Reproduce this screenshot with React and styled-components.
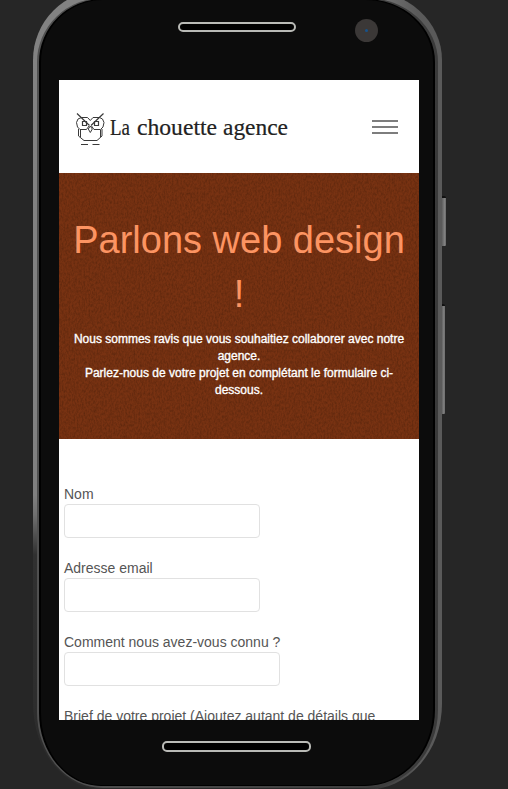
import React from "react";
import styled, { createGlobalStyle } from "styled-components";

const GlobalStyle = createGlobalStyle`
  * { box-sizing: border-box; }
  body { margin: 0; background: #262626; font-family: "Liberation Sans", Arial, sans-serif; }
`;

const Stage = styled.div`
  position: relative;
  width: 508px;
  height: 789px;
  overflow: hidden;
  background: #262626;
  display: flow-root;
`;

const SideButton = styled.div`
  position: absolute;
  left: 441px;
  top: ${(p) => p.$top}px;
  width: ${(p) => p.$width}px;
  height: ${(p) => p.$height}px;
  background: linear-gradient(90deg, #525252, #808080 70%, #6a6a6a);
  border-top: 2px solid #111;
  border-radius: 0 2px 1px 0;
`;

const Shell = styled.div`
  position: relative;
  width: 409px;
  height: 800px;
  margin: -10px 0 0 33px;
  padding: 8px 4px 2px 4px;
  border-radius: 70px 78px 76px 70px / 70px 70px 86px 86px;
  background: linear-gradient(90deg, transparent 80%, #5a5a5a 94%),
    linear-gradient(180deg, #828282 0, #808080 505px, #707070 525px, #303030 565px, #2b2b2b 100%);
`;

const Rim = styled.div`
  height: 100%;
  padding: 1px 3px 2px 2px;
  border-radius: 66px 72px 72px 66px / 64px 64px 78px 76px;
  background: linear-gradient(90deg, #505050, #444 60%, #3a3a3a);
`;

const Face = styled.div`
  height: 100%;
  display: flex;
  flex-direction: column;
  align-items: center;
  padding-left: 4px;
  border: 1px solid #000;
  border-left-width: 2px;
  border-right-width: 2px;
  border-radius: 64px 70px 70px 62px / 63px 63px 76px 73px;
  background: #0c0c0c;
`;

const TopBezel = styled.div`
  width: 360px;
  height: 80px;
  flex: none;
  display: flex;
  align-items: flex-start;
  padding: 22px 0 0 119px;
`;

const Speaker = styled.div`
  width: ${(p) => p.$width}px;
  height: ${(p) => p.$height}px;
  border: 2px solid #b9bab6;
  border-radius: 5px;
  background: #000;
`;

const Camera = styled.div`
  display: flex;
  align-items: center;
  justify-content: center;
  width: 23px;
  height: 23px;
  margin: -3px 0 0 59px;
  border-radius: 50%;
  background: #3b3837;

  &::after {
    content: "";
    width: 3px;
    height: 3px;
    border-radius: 50%;
    background: #17528a;
  }
`;

const Screen = styled.main`
  width: 360px;
  height: 640px;
  flex: none;
  overflow: hidden;
  background: #fff;
`;

const BottomBezel = styled.div`
  width: 360px;
  padding: 21px 0 0 103px;
`;

const Header = styled.header`
  height: 93px;
  display: flex;
  align-items: center;
  justify-content: space-between;
  padding: 0 21px 0 16px;
`;

const Logo = styled.svg`
  display: block;
  font-family: "Liberation Serif", serif;
`;

const MenuButton = styled.button`
  width: 26px;
  height: 14px;
  display: flex;
  flex-direction: column;
  justify-content: space-between;
  padding: 0;
  border: 0;
  background: none;
`;

const MenuLine = styled.span`
  height: 2px;
  background: #7d7d7d;
`;

const Hero = styled.section`
  position: relative;
  height: 266px;
  padding: 40px 5px 0;
  text-align: center;
  background: #783212;
`;

const Grain = styled.svg`
  position: absolute;
  inset: 0;
  width: 100%;
  height: 100%;
`;

const Title = styled.h1`
  position: relative;
  margin: 0 0 10px;
  font-size: 38px;
  line-height: 54px;
  font-weight: 400;
  color: #fc9462;
`;

const Intro = styled.p`
  position: relative;
  margin: 0;
  font-size: 12px;
  line-height: 17px;
  color: #fff;
  -webkit-text-stroke: 0.35px #fff;
`;

const Form = styled.form`
  display: flex;
  flex-direction: column;
  gap: 20px;
  padding: 45px 5px 0;
`;

const Field = styled.label`
  display: block;
  font-size: 14px;
  line-height: 20px;
  color: #555;
`;

const Input = styled.input`
  display: block;
  width: ${(p) => p.$width}px;
  height: 34px;
  padding: 6px 12px;
  border: 1px solid #e1e1e1;
  border-radius: 4px;
  background: #fff;
`;

const words = [
  { text: "La", x: 110, width: 20 },
  { text: "chouette", x: 137, width: 80 },
  { text: "agence", x: 223, width: 65 },
];

function BrandLogo() {
  return (
    <Logo width="216" height="44" viewBox="75 105 216 44" aria-label="La chouette agence">
      <g fill="none" stroke="#3a3a3a" strokeWidth="1">
        <path d="M77 113.500L89.500 125.500M103.500 113.500L91 125.500" strokeWidth="1.200" />
        <path d="M81.500 117.500L78 119L76.500 122.500L77.500 127L80 129.500H86.500L89 126M99.500 117.500L102.500 119L104 122.500L103 127L100.500 129.500H94L91.500 126" />
        <path d="M81.500 117.500H87.500L90.300 120.500L93 117.500H99.500" />
        <path d="M82.500 121.500H86.500V125.500H82.500ZM94.500 121.500H98.500V125.500H94.500Z" strokeWidth="1.200" />
        <path d="M90.300 126L88.300 129L90.300 132.500L92.300 129Z" />
        <path d="M78.500 129V136L84 140.500H97L102 136V129M80.500 130V137M100.500 130V137" />
        <path d="M81 144.500H88M92.500 144.500H99.500" strokeWidth="1.200" />
      </g>
      <g fill="#222" stroke="#222" strokeWidth=".2" fontSize="23">
        {words.map((word) => (
          <text key={word.text} x={word.x} y="135.300" textLength={word.width} lengthAdjust="spacingAndGlyphs">
            {word.text}
          </text>
        ))}
      </g>
    </Logo>
  );
}

const fields = [
  { label: "Nom", width: 196 },
  { label: "Adresse email", width: 196 },
  { label: "Comment nous avez-vous connu ?", width: 216 },
  { label: "Brief de votre projet (Ajoutez autant de détails que", width: 216 },
];

export default function App() {
  return (
    <Stage>
      <GlobalStyle />
      <SideButton $top={196} $width={5} $height={50} />
      <SideButton $top={304} $width={4} $height={110} />
      <Shell>
        <Rim>
          <Face>
            <TopBezel>
              <Speaker $width={118} $height={10} />
              <Camera />
            </TopBezel>
            <Screen>
              <Header>
                <BrandLogo />
                <MenuButton type="button" aria-label="Menu">
                  <MenuLine />
                  <MenuLine />
                  <MenuLine />
                </MenuButton>
              </Header>
              <Hero>
                <Grain aria-hidden="true">
                  <filter id="grain" x="0" y="0" width="100%" height="100%" colorInterpolationFilters="sRGB">
                    <feTurbulence type="fractalNoise" baseFrequency="0.6 0.35" numOctaves="3" seed="4" />
                    <feColorMatrix values="0 0 0 0 0.22  0 0 0 0 0.09  0 0 0 0 0.02  0.7 0 0 0 -0.24" />
                  </filter>
                  <rect width="100%" height="100%" filter="url(#grain)" />
                </Grain>
                <Title>Parlons web design !</Title>
                <Intro>
                  Nous sommes ravis que vous souhaitiez collaborer avec notre agence.
                  <br />
                  Parlez-nous de votre projet en complétant le formulaire ci-dessous.
                </Intro>
              </Hero>
              <Form>
                {fields.map((field) => (
                  <Field key={field.label}>
                    {field.label}
                    <Input $width={field.width} />
                  </Field>
                ))}
              </Form>
            </Screen>
            <BottomBezel>
              <Speaker $width={149} $height={11} />
            </BottomBezel>
          </Face>
        </Rim>
      </Shell>
    </Stage>
  );
}
